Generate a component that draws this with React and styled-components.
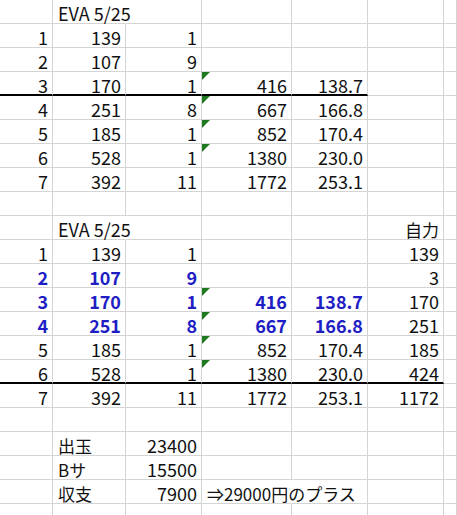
import React from 'react';
import styled, { createGlobalStyle } from 'styled-components';

const GlobalStyle = createGlobalStyle`
html, body {
  margin: 0;
  padding: 0;
  background: #ffffff;
  overflow: hidden;
}
`

const Sheet = styled.div`
display: grid;
grid-template-columns: 53px 73px 76px 90px 76px 76px 1fr;
grid-auto-rows: 24px;
width: 457px;
height: 515px;
overflow: hidden;
font-family: "Noto Sans CJK JP", sans-serif;
font-size: 18px;
color: #111111;
`

const Cell = styled.div`
position: relative;
box-sizing: border-box;
display: flex;
align-items: flex-end;
justify-content: ${p => (p.$left ? 'flex-start' : 'flex-end')};
padding: 0 ${p => (p.$left ? '0' : '4px')} ${p => (p.$rule ? '0' : '1px')} ${p => (p.$left ? '5px' : '0')};
line-height: 1;
white-space: nowrap;
border-right: 1px solid ${p => (p.$spill ? 'transparent' : '#d4d4d4')};
border-bottom: ${p => (p.$rule ? '2px solid #000000' : '1px solid #d4d4d4')};
color: ${p => (p.$blue ? '#1e1ec4' : 'inherit')};
font-weight: ${p => (p.$blue ? 700 : 400)};
z-index: ${p => (p.$spill ? 1 : 0)};

&::before {
  content: '';
  display: ${p => (p.$mark ? 'block' : 'none')};
  position: absolute;
  top: 0;
  left: 0;
  border-top: 8px solid #1f7a1f;
  border-right: 8px solid transparent;
}
`

const Text = styled.span`
font-size: ${p => (p.$cjk ? '17px' : 'inherit')};
`

const rows = [
  { cells: ['', 'EVA 5/25'], left: [1], spill: 1 },
  { cells: ['1', '139', '1'] },
  { cells: ['2', '107', '9'] },
  { cells: ['3', '170', '1', '416', '138.7'], mark: true, rule: 5 },
  { cells: ['4', '251', '8', '667', '166.8'], mark: true },
  { cells: ['5', '185', '1', '852', '170.4'], mark: true },
  { cells: ['6', '528', '1', '1380', '230.0'], mark: true },
  { cells: ['7', '392', '11', '1772', '253.1'] },
  { cells: [] },
  { cells: ['', 'EVA 5/25', '', '', '', '自力'], left: [1], spill: 1 },
  { cells: ['1', '139', '1', '', '', '139'] },
  { cells: ['2', '107', '9', '', '', '3'], blue: 3 },
  { cells: ['3', '170', '1', '416', '138.7', '170'], blue: 5, mark: true },
  { cells: ['4', '251', '8', '667', '166.8', '251'], blue: 5, mark: true },
  { cells: ['5', '185', '1', '852', '170.4', '185'], mark: true },
  { cells: ['6', '528', '1', '1380', '230.0', '424'], mark: true, rule: 6 },
  { cells: ['7', '392', '11', '1772', '253.1', '1172'] },
  { cells: [] },
  { cells: ['', '出玉', '23400'], left: [1] },
  { cells: ['', 'Bサ', '15500'], left: [1] },
  { cells: ['', '収支', '7900', '⇒29000円のプラス'], left: [1, 3], spill: 3 },
  { cells: [] },
]

const hasCjk = s => /[^\x00-\x7f]/.test(s)

const App = () => {
  return (
    <>
      <GlobalStyle />
      <Sheet>
        {rows.map((row, r) =>
          Array.from({ length: 7 }, (_, c) => {
            const value = row.cells[c] || ''
            return (
              <Cell
                key={r + '-' + c}
                $left={row.left && row.left.includes(c)}
                $spill={row.spill === c}
                $rule={row.rule && c < row.rule}
                $blue={row.blue && c < row.blue}
                $mark={row.mark && c === 3}
              >
                {value && <Text $cjk={hasCjk(value)}>{value}</Text>}
              </Cell>
            )
          })
        )}
      </Sheet>
    </>
  );
}

export default App;
